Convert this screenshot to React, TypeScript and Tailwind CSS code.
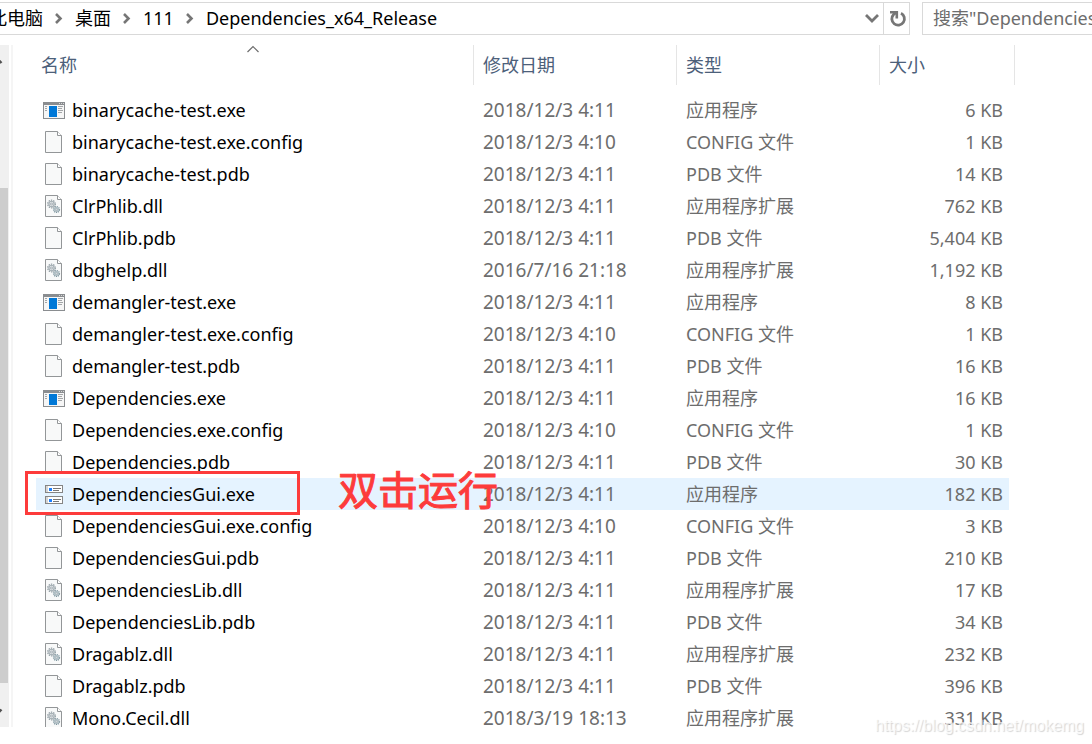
import { useState } from 'react';
import { clsx } from 'clsx';

type Kind = 'app' | 'file' | 'dll' | 'gui';

const files: { name: string; date: string; kind: Kind; type: string; size: string }[] = [
  { name: 'binarycache-test.exe', date: '2018/12/3 4:11', kind: 'app', type: '应用程序', size: '6 KB' },
  { name: 'binarycache-test.exe.config', date: '2018/12/3 4:10', kind: 'file', type: 'CONFIG 文件', size: '1 KB' },
  { name: 'binarycache-test.pdb', date: '2018/12/3 4:11', kind: 'file', type: 'PDB 文件', size: '14 KB' },
  { name: 'ClrPhlib.dll', date: '2018/12/3 4:11', kind: 'dll', type: '应用程序扩展', size: '762 KB' },
  { name: 'ClrPhlib.pdb', date: '2018/12/3 4:11', kind: 'file', type: 'PDB 文件', size: '5,404 KB' },
  { name: 'dbghelp.dll', date: '2016/7/16 21:18', kind: 'dll', type: '应用程序扩展', size: '1,192 KB' },
  { name: 'demangler-test.exe', date: '2018/12/3 4:11', kind: 'app', type: '应用程序', size: '8 KB' },
  { name: 'demangler-test.exe.config', date: '2018/12/3 4:10', kind: 'file', type: 'CONFIG 文件', size: '1 KB' },
  { name: 'demangler-test.pdb', date: '2018/12/3 4:11', kind: 'file', type: 'PDB 文件', size: '16 KB' },
  { name: 'Dependencies.exe', date: '2018/12/3 4:11', kind: 'app', type: '应用程序', size: '16 KB' },
  { name: 'Dependencies.exe.config', date: '2018/12/3 4:10', kind: 'file', type: 'CONFIG 文件', size: '1 KB' },
  { name: 'Dependencies.pdb', date: '2018/12/3 4:11', kind: 'file', type: 'PDB 文件', size: '30 KB' },
  { name: 'DependenciesGui.exe', date: '2018/12/3 4:11', kind: 'gui', type: '应用程序', size: '182 KB' },
  { name: 'DependenciesGui.exe.config', date: '2018/12/3 4:10', kind: 'file', type: 'CONFIG 文件', size: '3 KB' },
  { name: 'DependenciesGui.pdb', date: '2018/12/3 4:11', kind: 'file', type: 'PDB 文件', size: '210 KB' },
  { name: 'DependenciesLib.dll', date: '2018/12/3 4:11', kind: 'dll', type: '应用程序扩展', size: '17 KB' },
  { name: 'DependenciesLib.pdb', date: '2018/12/3 4:11', kind: 'file', type: 'PDB 文件', size: '34 KB' },
  { name: 'Dragablz.dll', date: '2018/12/3 4:11', kind: 'dll', type: '应用程序扩展', size: '232 KB' },
  { name: 'Dragablz.pdb', date: '2018/12/3 4:11', kind: 'file', type: 'PDB 文件', size: '396 KB' },
  { name: 'Mono.Cecil.dll', date: '2018/3/19 18:13', kind: 'dll', type: '应用程序扩展', size: '331 KB' },
];

const crumbs = ['此电脑', '桌面', '111', 'Dependencies_x64_Release'];

function FileIcon({ kind }: { kind: Kind }) {
  if (kind === 'app') {
    return (
      <svg width="22" height="17" viewBox="0 0 22 17" aria-hidden="true">
        <rect x="0.5" y="0.5" width="21" height="16" fill="#f6f6f6" stroke="#8a8d90" />
        <rect width="22" height="3" fill="#8a8d90" />
        <path d="M16 1.5h1M18 1.5h1M20 1.5h1" stroke="#d8d8d8" />
        <rect x="6" y="4" width="8" height="11" fill="#0078d7" />
        <path d="M2 4.5h2M2 6.5h2M2 8.5h2M15 4.5h5M15 6.5h4M15 8.5h5M15 10.5h4" stroke="#a3a6a8" />
      </svg>
    );
  }
  if (kind === 'gui') {
    return (
      <svg width="18" height="19" viewBox="0 0 18 19" aria-hidden="true">
        {[0, 11].map(y => (
          <g key={y}>
            <rect x="0.5" y={y + 0.5} width="17" height="7" fill="#fff" stroke="#858585" />
            <rect x="1" y={y + 1} width="2" height="6" fill="#d5d5d5" />
            <rect x="4" y={y + 3} width="3" height="3" fill="#1e80ff" />
            <path d={`M8 ${y + 3.5}h8M8 ${y + 5.5}h6`} stroke="#777" />
          </g>
        ))}
      </svg>
    );
  }
  return (
    <svg width="17" height="22" viewBox="0 0 17 22" aria-hidden="true">
      <path d="M0.5 0.5h12l4 4v17h-16z" fill="#f8f9f9" stroke="#939698" />
      <path d="M12.5 0.5v4h4" fill="#fff" stroke="#939698" />
      {kind === 'dll' && (
        <g fill="none">
          <circle cx="6.5" cy="9" r="3.8" stroke="#8b979e" strokeWidth="1.2" strokeDasharray="1.4 1" />
          <circle cx="6.5" cy="9" r="2.6" stroke="#a9b3b8" strokeWidth="1.4" />
          <circle cx="6.5" cy="9" r="1" fill="#fff" stroke="#84929a" strokeWidth="0.8" />
          <circle cx="11.5" cy="14.5" r="3" stroke="#7d959f" strokeWidth="1.2" strokeDasharray="1.2 0.8" />
          <circle cx="11.5" cy="14.5" r="2" fill="#d3dde1" stroke="#9fb0b7" />
          <circle cx="11.5" cy="14.5" r="0.8" fill="#fff" stroke="#84929a" strokeWidth="0.6" />
        </g>
      )}
    </svg>
  );
}

function AddressBar() {
  return (
    <header className="flex h-[33px] flex-shrink-0 gap-3 mt-[2px]">
      <div className="flex min-w-0 flex-1 border border-l-0 border-[#d9d9d9]">
        <nav className="-ml-[11px] flex min-w-0 flex-1 items-center gap-3 overflow-hidden pb-px">
          {crumbs.map((crumb, i) => (
            <div key={crumb} className="flex flex-shrink-0 items-center gap-3">
              {i > 0 && (
                <svg width="8" height="11" viewBox="0 0 8 11" fill="none" aria-hidden="true">
                  <path d="M1 1l4.5 4.5L1 10" stroke="#767676" strokeWidth="2.6" />
                </svg>
              )}
              <button className="whitespace-nowrap">{crumb}</button>
            </div>
          ))}
        </nav>
        <button aria-label="以前的位置" className="flex w-[22px] items-center justify-center">
          <svg width="14" height="9" viewBox="0 0 14 9" fill="none">
            <path d="M1 1l6 6 6-6" stroke="#767676" strokeWidth="2.8" />
          </svg>
        </button>
        <button aria-label="刷新" className="flex w-[26px] items-center justify-center border-l border-[#d9d9d9] pl-[2px]">
          <svg width="18" height="18" viewBox="0 0 18 18" fill="none">
            <path d="M12 3.2A6.3 6.3 0 1 1 4.6 4.4L7 2.6" stroke="#767676" strokeWidth="2.8" />
            <path d="M1 2.3h6.8v6.2" stroke="#767676" strokeWidth="2.6" />
          </svg>
        </button>
      </div>
      <input
        type="text"
        aria-label="搜索"
        placeholder={'搜索"Dependencies_x64_Release"'}
        className="w-[170px] border border-r-0 border-[#d9d9d9] pb-px pl-[10px] outline-none placeholder:text-[#6d6d6d]"
      />
    </header>
  );
}

function ScrollBar() {
  return (
    <div className="flex w-[9px] flex-shrink-0 flex-col justify-between overflow-hidden bg-[#f0f0f0]">
      <svg className="mt-[13px]" width="9" height="7" viewBox="0 0 9 7" fill="none" aria-hidden="true">
        <path d="M-3 0.5L1.5 5" stroke="#505050" strokeWidth="2.4" />
      </svg>
      <div className="mt-[123px] mb-[25px] mr-px flex-1 bg-[#cdcdcd]" />
      <svg className="mb-[12px]" width="9" height="7" viewBox="0 0 9 7" fill="none" aria-hidden="true">
        <path d="M-3 6L1.5 1.5" stroke="#505050" strokeWidth="2.4" />
      </svg>
    </div>
  );
}

const headCell = 'h-10 w-full flex items-center border-r border-[#e5e5e5] text-[#4c607a]';

export default function App() {
  const [selected, setSelected] = useState('DependenciesGui.exe');

  return (
    <div className="relative flex h-screen flex-col overflow-hidden bg-white font-['Noto_Sans','Noto_Sans_CJK_SC',sans-serif] text-[18px] leading-6 text-black">
      <AddressBar />
      <main className="mt-[10px] mb-[17px] flex min-h-0 flex-1 overflow-hidden">
        <ScrollBar />
        <div className="ml-[2px] w-[2px] flex-shrink-0 bg-[#f5f5f5]" />
        <div className="min-w-0 flex-1 pl-[23px] pr-[77px]">
          <table className="w-full table-fixed border-collapse">
            <colgroup>
              <col />
              <col className="w-[203px]" />
              <col className="w-[203px]" />
              <col className="w-[129px]" />
              <col className="w-[6px]" />
            </colgroup>
            <thead>
              <tr className="h-[49px] align-top font-normal">
                <th className="p-0 font-normal">
                  <button className={clsx(headCell, 'relative pl-[5px]')}>
                    名称
                    <svg className="absolute left-1/2 top-0 -ml-2" width="12" height="8" viewBox="0 0 12 8" fill="none" aria-hidden="true">
                      <path d="M0.5 7L6 1.5 11.5 7" stroke="#6d6d6d" strokeWidth="1.2" />
                    </svg>
                  </button>
                </th>
                <th className="p-0 font-normal"><button className={clsx(headCell, 'pl-[9px]')}>修改日期</button></th>
                <th className="p-0 font-normal"><button className={clsx(headCell, 'pl-[9px]')}>类型</button></th>
                <th colSpan={2} className="p-0 font-normal"><button className={clsx(headCell, 'pl-[9px]')}>大小</button></th>
              </tr>
            </thead>
            <tbody>
              {files.map(f => {
                const cell = clsx('h-8 p-0 whitespace-nowrap', selected === f.name && 'bg-[#e5f3ff]');
                return (
                  <tr key={f.name} className="text-[#6d6d6d]" onClick={() => setSelected(f.name)}>
                    <td className={cell}>
                      <div className="relative flex h-8 items-center gap-[7px] pl-[7px] text-black">
                        <span className={clsx('flex w-[22px] flex-shrink-0', f.kind !== 'app' && 'pl-[2px]')}>
                          <FileIcon kind={f.kind} />
                        </span>
                        {f.name}
                        {f.kind === 'gui' && (
                          <>
                            <div className="absolute -left-[11px] -top-[7px] z-10 h-11 w-[275px] border-[3px] border-[#fd3b3b]" />
                            <div className="absolute left-[302px] -top-2 z-10 text-[40px] leading-10 text-[#fd3b3b] [-webkit-text-stroke:1px_#fd3b3b]">双击运行</div>
                          </>
                        )}
                      </div>
                    </td>
                    <td className={clsx(cell, 'pl-[9px] text-[19px]')}>{f.date}</td>
                    <td className={clsx(cell, 'pl-[9px]')}>{f.type}</td>
                    <td className={clsx(cell, 'pr-[6px] text-right')}>{f.size}</td>
                    <td className="p-0" />
                  </tr>
                );
              })}
            </tbody>
          </table>
        </div>
      </main>
      <div className="pointer-events-none absolute bottom-2 right-2 font-['Liberation_Sans',sans-serif] text-[16px] leading-5 text-white/70 [text-shadow:1px_1px_1px_#d4d4d4]">
        https://blog.csdn.net/mokemg
      </div>
    </div>
  );
}
